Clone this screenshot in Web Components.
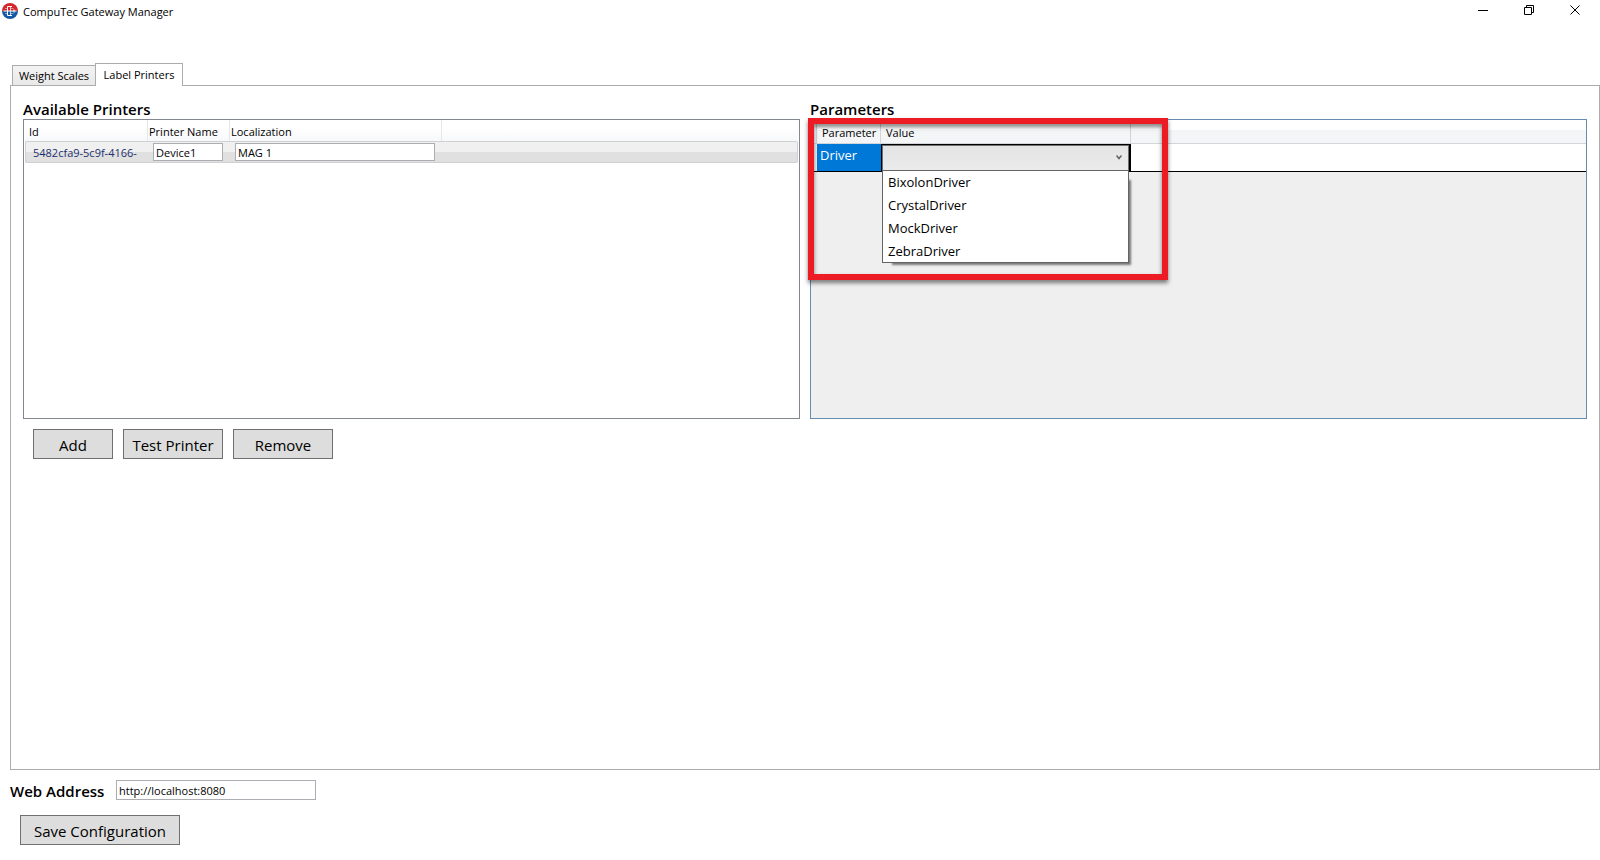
<!DOCTYPE html>
<html lang="en">
<head>
<meta charset="utf-8">
<title>CompuTec Gateway Manager</title>
<style>
  html, body { margin: 0; background: #fff; }
  body { font: 11px/16px "Open Sans", "Noto Sans", sans-serif; color: #000; }
</style>
</head>
<body>
<gm-window>
  <gm-title-bar slot="title">CompuTec Gateway Manager</gm-title-bar>
  <gm-tabs>
    <gm-group heading="Available Printers">
      <gm-printer-list></gm-printer-list>
      <gm-button slot="actions" size="small">Add</gm-button>
      <gm-button slot="actions" size="medium">Test Printer</gm-button>
      <gm-button slot="actions" size="medium">Remove</gm-button>
    </gm-group>
    <gm-group heading="Parameters">
      <gm-parameter-grid></gm-parameter-grid>
    </gm-group>
  </gm-tabs>
  <gm-address-bar slot="footer" value="http://localhost:8080">Web Address</gm-address-bar>
  <gm-button slot="footer" size="large">Save Configuration</gm-button>
</gm-window>

<script>
const define = (name, html, setup) => {
  const template = document.createElement('template');
  template.innerHTML = html;
  customElements.define(name, class extends HTMLElement {
    connectedCallback() {
      if (this.shadowRoot) return;
      const root = this.attachShadow({ mode: 'open' });
      root.append(template.content.cloneNode(true));
      if (setup) setup(this, root);
    }
  });
};

define('gm-window', `
  <style>
    :host { display: flex; flex-direction: column; min-height: 100vh; box-sizing: border-box; }
    main { flex: 1; display: flex; flex-direction: column; padding: 39px 0 0 10px; }
    ::slotted(gm-tabs) { flex: 1; }
    footer { display: flex; flex-direction: column; align-items: flex-start; gap: 15px; padding: 10px 10px 15px; }
    ::slotted(gm-button) { margin-left: 10px; }
  </style>
  <slot name="title"></slot>
  <main><slot></slot></main>
  <footer><slot name="footer"></slot></footer>`);

define('gm-title-bar', `
  <style>
    :host { display: block; }
    header { display: flex; align-items: center; height: 24px; padding: 0 2px; }
    .logo { width: 16px; height: 16px; margin-right: 5px; margin-bottom: 2px; }
    h1 { flex: 1; margin: 0; font-size: 11px; font-weight: 400; }
    nav { display: flex; }
    button { width: 46px; height: 24px; padding: 0 0 3px; border: 0; background: none; display: grid; place-items: center; }
    button svg { width: 11px; height: 11px; fill: none; stroke: #000; }
  </style>
  <header>
    <svg class="logo" viewBox="0 0 16 16" aria-hidden="true">
      <path d="M0 8a8 8 0 0 1 16 0z" fill="#d2272d"/>
      <path d="M0 8a8 8 0 0 0 16 0z" fill="#1559a5"/>
      <g fill="none" stroke="#fff" stroke-width="1">
        <path d="M10 3.500H5.500v9H10M1.500 8h13M12 6.500v3"/>
        <path d="M8.500 3v10" opacity=".7"/>
        <path d="M3 5.500h2.500M3 10.500h2.500M8.500 5.500h3M8.500 10.500h3" opacity=".45"/>
      </g>
    </svg>
    <h1><slot></slot></h1>
    <nav>
      <button aria-label="Minimize"><svg viewBox="0 0 11 11"><path d="M0 5.500h10"/></svg></button>
      <button aria-label="Restore"><svg viewBox="0 0 11 11"><path d="M.5 2.500h7v7h-7zM2.500 2.500v-2h7v7h-2"/></svg></button>
      <button aria-label="Close"><svg viewBox="0 0 11 11"><path d="M.5.5l9 9M9.500.5l-9 9"/></svg></button>
    </nav>
  </header>`);

define('gm-tabs', `
  <style>
    :host { display: flex; flex-direction: column; }
    .strip { display: flex; align-items: flex-end; padding-left: 2px; margin-bottom: -1px; position: relative; }
    button { font: inherit; color: inherit; margin: 0; padding: 0; box-sizing: border-box; white-space: nowrap; border: 1px solid #acacac; border-bottom: 0; }
    .idle { width: 83px; height: 21px; border-right: 0; border-bottom: 1px solid #acacac; background: linear-gradient(#f3f3f3, #e8e8e8); }
    .current { width: 88px; height: 23px; background: #fff; }
    section { flex: 1; display: flex; align-items: flex-start; gap: 10px; border: 1px solid #acacac; padding: 12px; }
    ::slotted(*) { flex: 1; min-width: 0; }
  </style>
  <div class="strip" role="tablist">
    <button class="idle" role="tab" aria-selected="false">Weight Scales</button>
    <button class="current" role="tab" aria-selected="true">Label Printers</button>
  </div>
  <section role="tabpanel"><slot></slot></section>`);

define('gm-group', `
  <style>
    :host { display: block; }
    h2 { margin: 0; height: 21px; font-size: 15px; line-height: 22px; font-weight: 600; }
    .actions { display: flex; gap: 10px; padding: 10px; }
  </style>
  <h2></h2>
  <slot></slot>
  <div class="actions"><slot name="actions"></slot></div>`,
  (host, root) => { root.querySelector('h2').textContent = host.getAttribute('heading'); });

define('gm-button', `
  <style>
    :host { display: block; }
    :host([size=small]) { width: 80px; }
    :host([size=medium]) { width: 100px; }
    :host([size=large]) { width: 160px; }
    button { width: 100%; height: 30px; padding: 1px 0 0; border: 1px solid #707070; background: #ddd; font: inherit; font-size: 15px; color: inherit; white-space: nowrap; }
  </style>
  <button><slot></slot></button>`);

define('gm-printer-list', `
  <style>
    :host { display: block; box-sizing: border-box; height: 300px; border: 1px solid #828790; padding: 0 1px; background: #fff; }
    table { width: 100%; table-layout: fixed; border-collapse: separate; border-spacing: 0; }
    th, td { padding: 0; text-align: left; font-weight: 400; white-space: nowrap; }
    th { height: 21px; box-sizing: border-box; padding: 2px 0 0 1px; border-right: 1px solid #e3e8ee; background: linear-gradient(#fff 40%, #f7f8fa); }
    th:first-child { padding-left: 4px; }
    th:last-child { border-right: 0; }
    td { height: 22px; box-sizing: border-box; border: solid #d0d0d0; border-width: 1px 0; background: linear-gradient(#f0f0f0 50%, #e0e0e0 50%); }
    td:first-child { border-left-width: 1px; border-radius: 2px 0 0 2px; padding: 1px 0 0 7px; color: #1c2f6e; }
    td:last-child { border-right-width: 1px; border-radius: 0 2px 2px 0; }
    input { display: block; box-sizing: border-box; width: 200px; height: 18px; margin-left: 5px; padding: 0 2px; border: 1px solid #abadb3; background: #fff; font: inherit; color: inherit; }
    .name { width: 70px; }
  </style>
  <table>
    <colgroup><col style="width:123px"><col style="width:82px"><col style="width:212px"><col></colgroup>
    <thead><tr><th>Id</th><th>Printer Name</th><th>Localization</th><th></th></tr></thead>
    <tbody><tr>
      <td>5482cfa9-5c9f-4166-</td>
      <td><input class="name" aria-label="Printer Name" value="Device1"></td>
      <td><input aria-label="Localization" value="MAG 1"></td>
      <td></td>
    </tr></tbody>
  </table>`);

define('gm-parameter-grid', `
  <style>
    :host { display: block; position: relative; box-sizing: border-box; height: 300px; border: 1px solid #688caf; background: #efefef; }
    table { width: 100%; table-layout: fixed; border-spacing: 0; border-collapse: separate; }
    th, td { padding: 0; text-align: left; font-weight: 400; white-space: nowrap; box-sizing: border-box; }
    th { height: 24px; padding: 2px 0 0 5px; background: linear-gradient(#fff 45%, #f3f5f6 45%); border: solid #d3d5d8; border-width: 0 1px 1px 0; }
    th:first-child { padding: 0; }
    th:last-child { border-right: 0; }
    td { height: 28px; background: #fff; border-bottom: 1px solid #000; }
    td.key { background: #0078d7; color: #fff; font-size: 13px; line-height: 18px; padding: 2px 0 0 3px; vertical-align: top; }
    td.head { background: #f0f0f0; }
    td.value { border: 0; }
    .callout { position: absolute; left: -3px; top: -2px; width: 360px; height: 162px; box-sizing: border-box; border: 6px solid #ed1c24; filter: drop-shadow(0 3px 2px rgba(0,0,0,.5)); pointer-events: none; z-index: 3; }
  </style>
  <table>
    <colgroup><col style="width:6px"><col style="width:64px"><col style="width:250px"><col></colgroup>
    <thead><tr><th></th><th>Parameter</th><th>Value</th><th></th></tr></thead>
    <tbody><tr>
      <td class="head"></td><td class="key">Driver</td>
      <td class="value"><gm-driver-select></gm-driver-select></td><td></td>
    </tr></tbody>
  </table>
  <div class="callout"></div>`);

define('gm-driver-select', `
  <style>
    :host { display: block; position: relative; box-sizing: border-box; height: 28px; border: solid #000; border-width: 1px 2px 1px 1px; font-size: 13px; }
    select { appearance: none; display: block; width: 100%; height: 26px; margin: 0; padding: 0 20px 0 4px; border: 1px solid #707070; border-radius: 0; background: linear-gradient(#e4e4e4, #ebebeb); font: inherit; }
    svg { position: absolute; right: 7px; top: 9px; width: 6px; height: 6px; fill: none; stroke: #606060; pointer-events: none; stroke-width: 1.500; }
    ul { position: absolute; z-index: 2; left: 0; right: 0; top: 25px; margin: 0; padding: 0; height: 93px; box-sizing: border-box; list-style: none; background: #fff; border: 1px solid #646464; }
    ul::after { content: ""; position: absolute; z-index: -1; inset: 8px 0 0 8px; box-shadow: 2px 2px 2px 1px rgba(0,0,0,.5); clip-path: polygon(100% 0, calc(100% + 8px) -4px, calc(100% + 8px) calc(100% + 8px), -4px calc(100% + 8px), -4px calc(100% + 1px), calc(100% + 1px) calc(100% + 1px), calc(100% + 1px) -4px); }
    li { height: 23px; line-height: 23px; padding-left: 5px; }
  </style>
  <select aria-label="Driver"><option></option></select>
  <svg viewBox="0 0 6 6" aria-hidden="true"><path d="M.5 1.500l2.500 3 2.500-3"/></svg>
  <ul role="listbox" aria-label="Drivers">
    <li role="option">BixolonDriver</li>
    <li role="option">CrystalDriver</li>
    <li role="option">MockDriver</li>
    <li role="option">ZebraDriver</li>
  </ul>`);

define('gm-address-bar', `
  <style>
    :host { display: flex; gap: 10px; }
    label { width: 96px; font-size: 15px; line-height: 22px; height: 20px; font-weight: 600; white-space: nowrap; }
    input { box-sizing: border-box; width: 200px; height: 20px; padding: 0 2px; border: 1px solid #abadb3; font: inherit; color: inherit; }
  </style>
  <label for="address"><slot></slot></label>
  <input id="address">`,
  (host, root) => { root.querySelector('input').value = host.getAttribute('value'); });
</script>
</body>
</html>
